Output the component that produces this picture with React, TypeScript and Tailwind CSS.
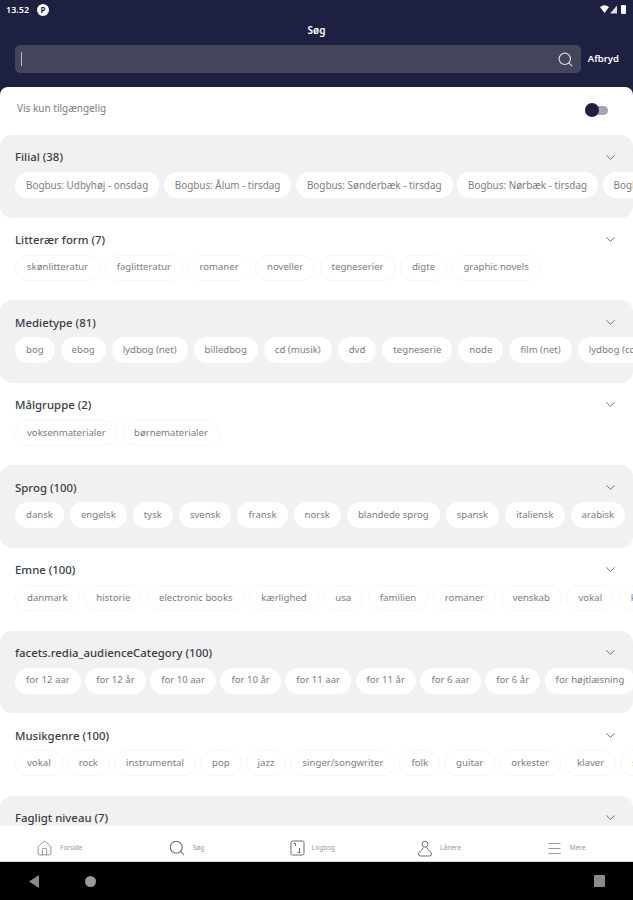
import React from "react";
import { ChevronDown, House, Menu, Search } from "lucide-react";

type Facet = { title: string; chips: string[]; spacing: string };

const facets: Facet[] = [
  { title: "Filial (38)", spacing: "gap-[4.5px] text-[9.9px]", chips: ["Bogbus: Udbyhøj - onsdag", "Bogbus: Ålum - tirsdag", "Bogbus: Sønderbæk - tirsdag", "Bogbus: Nørbæk - tirsdag", "Bogbus: Vestrup - tirsdag"] },
  { title: "Litterær form (7)", spacing: "gap-[4.4px] text-[9.6px]", chips: ["skønlitteratur", "faglitteratur", "romaner", "noveller", "tegneserier", "digte", "graphic novels"] },
  { title: "Medietype (81)", spacing: "gap-[6px] text-[9.6px]", chips: ["bog", "ebog", "lydbog (net)", "billedbog", "cd (musik)", "dvd", "tegneserie", "node", "film (net)", "lydbog (cd)"] },
  { title: "Målgruppe (2)", spacing: "gap-[4.4px] text-[9.6px]", chips: ["voksenmaterialer", "børnematerialer"] },
  { title: "Sprog (100)", spacing: "gap-[6px] text-[9.6px]", chips: ["dansk", "engelsk", "tysk", "svensk", "fransk", "norsk", "blandede sprog", "spansk", "italiensk", "arabisk"] },
  { title: "Emne (100)", spacing: "gap-[4.6px] text-[9.6px]", chips: ["danmark", "historie", "electronic books", "kærlighed", "usa", "familien", "romaner", "venskab", "vokal", "krig"] },
  { title: "facets.redia_audienceCategory (100)", spacing: "gap-[4.5px] text-[9.6px]", chips: ["for 12 aar", "for 12 år", "for 10 aar", "for 10 år", "for 11 aar", "for 11 år", "for 6 aar", "for 6 år", "for højtlæsning"] },
  { title: "Musikgenre (100)", spacing: "gap-[4px] text-[9.6px]", chips: ["vokal", "rock", "instrumental", "pop", "jazz", "singer/songwriter", "folk", "guitar", "orkester", "klaver", "soul"] },
  { title: "Fagligt niveau (7)", spacing: "gap-[4.5px] text-[9.6px]", chips: [] },
];

const FacetRow = ({ facet, shaded }: { facet: Facet; shaded: boolean }) => (
  <section className={`h-[82.6px] shrink-0 rounded-[12px] overflow-hidden pt-[14px] ${shaded ? "bg-[#f1f1f1]" : "bg-white"}`}>
    <div className="flex items-center justify-between pl-[15px] pr-[15px] h-[16px]">
      <h2 className="text-[11.4px] font-medium text-[#3a3c46]">{facet.title}</h2>
      <ChevronDown className="w-[15px] h-[15px] text-[#6f7078]" strokeWidth={1.6} />
    </div>
    <div className={`flex pl-[15px] mt-[7px] overflow-hidden ${facet.spacing}`}>
      {facet.chips.map((chip) => (
        <span
          key={chip}
          className={`shrink-0 h-[26px] px-[11px] flex items-center rounded-full text-[#7b7c83] ${shaded ? "bg-white" : "bg-white border border-[#f6f6f6]"}`}
        >
          {chip}
        </span>
      ))}
    </div>
  </section>
);

const NavItem = ({ icon, label }: { icon: React.ReactNode; label: string }) => (
  <div className="flex flex-1 items-center justify-center gap-[7px] text-[#6b6c74]">
    {icon}
    <span className="text-[6.5px] text-[#96979d]">{label}</span>
  </div>
);

const App: React.FC = () => {
  return (
    <div className="w-[633px] h-[900px] flex flex-col overflow-hidden bg-[#1d2040] font-['Noto_Sans',sans-serif]">
      <header className="h-[87px] shrink-0 text-white">
        <div className="h-[19px] flex items-center justify-between pl-[6px] pr-[5px]">
          <div className="flex items-center gap-[8px]">
            <span className="text-[9px] font-semibold">13.52</span>
            <span className="w-[12px] h-[12px] rounded-full bg-white flex items-center justify-center text-[8px] font-bold text-[#1d2040]">
              P
            </span>
          </div>
          <svg width="28" height="11" viewBox="0 0 28 11" fill="white">
            <path d="M0 3 Q4.5 -0.5 9 3 L4.5 9 Z" />
            <path d="M17 1.5 V9.5 H10 Z" opacity="0.85" />
            <rect x="21" y="1" width="5" height="9" rx="1" />
          </svg>
        </div>
        <h1 className="text-center text-[10px] font-semibold mt-[1px] leading-[20px]">Søg</h1>
        <div className="flex items-center pl-[15px] pr-[14px] mt-[5px] gap-[7px]">
          <div className="flex-1 h-[28px] rounded-[5px] bg-[#43455a] flex items-center justify-between pl-[6px] pr-[7px]">
            <span className="w-px h-[14px] bg-[#b9bac4]" />
            <Search className="w-[17px] h-[17px] text-[#dcdde2]" strokeWidth={1.6} />
          </div>
          <span className="text-[9.5px] font-semibold">Afbryd</span>
        </div>
      </header>

      <main className="flex-1 min-h-0 overflow-hidden bg-white rounded-t-[8px] flex flex-col">
        <div className="h-[48px] shrink-0 flex items-start justify-between pl-[17px] pr-[25px] pt-[14px]">
          <span className="text-[10px] leading-[15px] text-[#7b7c83]">Vis kun tilgængelig</span>
          <div className="relative w-[23px] h-[9px] mt-[5px] rounded-full bg-[#a5a6ad]">
            <span className="absolute left-0 top-[-3px] w-[14px] h-[14px] rounded-full bg-[#1d2040]" />
          </div>
        </div>
        {facets.map((facet, i) => (
          <FacetRow key={facet.title} facet={facet} shaded={i % 2 === 0} />
        ))}
      </main>

      <nav className="h-[36px] shrink-0 bg-white border-b border-[#d4d4d6] pt-[9px]">
        <div className="flex items-center h-full -translate-x-[4px]">
          <NavItem icon={<House className="w-[17px] h-[17px]" strokeWidth={1} />} label="Forside" />
          <NavItem icon={<Search className="w-[18px] h-[18px]" strokeWidth={1.4} />} label="Søg" />
          <NavItem
            icon={
              <svg width="15" height="16" viewBox="0 0 15 16" fill="none" stroke="currentColor" strokeWidth="1">
                <rect x="1" y="1" width="13" height="14" rx="1.5" />
                <path d="M3.5 3.5h2v2.5M9.5 8v4M7.5 12.5h3" />
              </svg>
            }
            label="Logbog"
          />
          <NavItem
            icon={
              <svg width="16" height="17" viewBox="0 0 16 17" fill="none" stroke="currentColor" strokeWidth="1">
                <circle cx="8" cy="4.2" r="3" />
                <path d="M6 7.5Q6 9.5 3.5 11Q1.5 12.2 1.5 14Q1.5 16 3.5 16H12.5Q14.5 16 14.5 14Q14.5 12.2 12.5 11Q10 9.5 10 7.5" />
              </svg>
            }
            label="Lånere"
          />
          <NavItem icon={<Menu className="w-[17px] h-[17px]" strokeWidth={1} />} label="Mere" />
        </div>
      </nav>

      <footer className="h-[38px] shrink-0 bg-black flex items-center justify-between pl-[29px] pr-[28px]">
        <div className="flex items-center gap-[46px]">
          <svg width="10" height="13" viewBox="0 0 10 13" fill="#8b8b8b">
            <path d="M10 0V13L0 6.5Z" />
          </svg>
          <span className="w-[11px] h-[11px] rounded-full bg-[#9a9a9a]" />
        </div>
        <span className="w-[11px] h-[12px] rounded-[1px] bg-[#8b8b8b]" />
      </footer>
    </div>
  );
};

export default App;
